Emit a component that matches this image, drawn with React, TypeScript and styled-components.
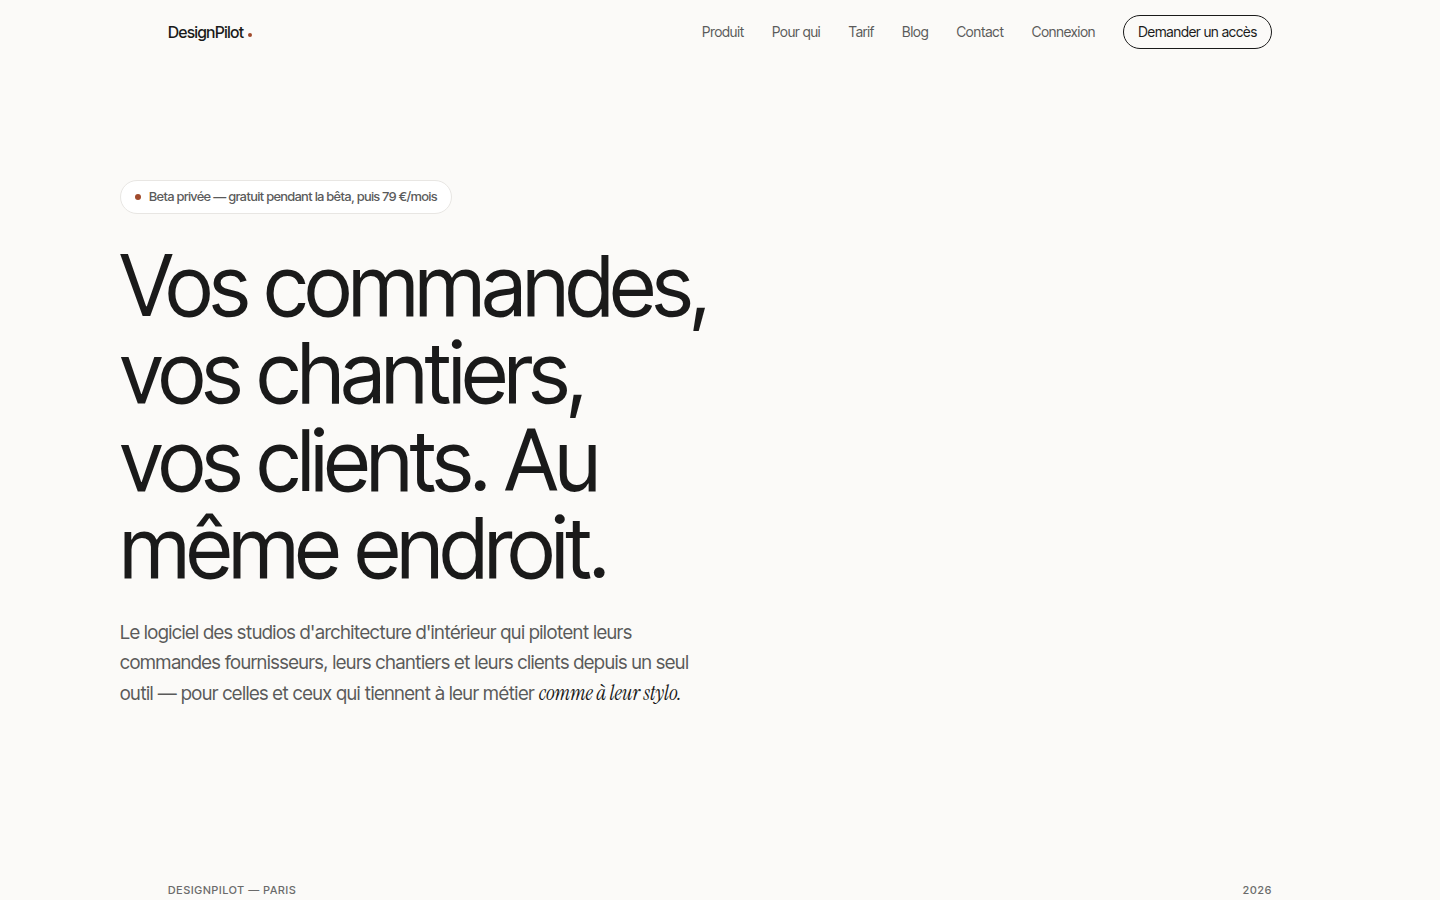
import React from "react";
import styled, { createGlobalStyle } from "styled-components";

const GlobalStyle = createGlobalStyle`
  *, *::before, *::after { box-sizing: border-box; }
  body {
    margin: 0;
    background: #fbfaf8;
    color: #1a1a1a;
    font-family: "Inter Tight", Inter, "Liberation Sans", sans-serif;
    -webkit-font-smoothing: antialiased;
  }
`;

const Page = styled.div`
  min-height: 100vh;
  display: flex;
  flex-direction: column;
`;

const Header = styled.header`
  width: 100%;
  max-width: 1200px;
  margin: 0 auto;
  height: 64px;
  padding: 0 48px;
  display: flex;
  align-items: center;
  justify-content: space-between;
`;

const Dot = styled.span<{ $size: number }>`
  width: ${(p) => p.$size}px;
  height: ${(p) => p.$size}px;
  border-radius: 50%;
  background: #a04a2c;
`;

const Brand = styled.a`
  display: inline-flex;
  align-items: center;
  gap: 4px;
  color: #1a1a1a;
  text-decoration: none;
  font-size: 16px;
  font-weight: 500;
  letter-spacing: -0.02em;

  ${Dot} {
    margin-top: 6px;
  }
`;

const Nav = styled.nav`
  display: flex;
  align-items: center;
  gap: 28px;
`;

const NavLink = styled.a`
  color: #5a5a5a;
  text-decoration: none;
  font-size: 14px;
  line-height: 32px;
  letter-spacing: -0.007em;
`;

const AccessLink = styled(NavLink)`
  color: #1a1a1a;
  border: 1px solid #1a1a1a;
  border-radius: 999px;
  padding: 0 14px;
`;

const Hero = styled.main`
  width: 100%;
  max-width: 1200px;
  margin: 0 auto;
  padding: 116px 0 168px;
  flex: 1;
`;

const Badge = styled.p`
  display: flex;
  width: fit-content;
  align-items: center;
  gap: 8px;
  margin: 0 0 28px;
  padding: 7px 14px 8px;
  border: 1px solid #e8e6e3;
  border-radius: 999px;
  background: #ffffff;
  color: #5a5a5a;
  font-size: 13px;
  line-height: 17px;
  font-weight: 500;
  letter-spacing: -0.02em;
`;

const Title = styled.h1`
  max-width: 600px;
  margin: 0 0 27px;
  font-size: 84px;
  line-height: 1.04;
  font-weight: 400;
  letter-spacing: -0.03em;
`;

const Lead = styled.p`
  max-width: 580px;
  margin: 0;
  color: #5a5a5a;
  font-size: 19px;
  line-height: 1.53;
  letter-spacing: -0.005em;
`;

const Accent = styled.em`
  color: #1a1a1a;
  font-family: "Instrument Serif", "Liberation Serif", serif;
  font-size: 21px;
`;

const Footer = styled.footer`
  width: 100%;
  max-width: 1200px;
  margin: 0 auto;
  padding: 0 48px;
  display: flex;
  justify-content: space-between;
  color: #6a6a6a;
  font-size: 11px;
  font-weight: 500;
  line-height: 20px;
  letter-spacing: 0.08em;
  text-transform: uppercase;
`;

const links = ["Produit", "Pour qui", "Tarif", "Blog", "Contact", "Connexion"];

export default function App() {
  return (
    <>
      <GlobalStyle />
      <Page>
        <Header>
          <Brand href="#">
            DesignPilot
            <Dot $size={4} />
          </Brand>
          <Nav aria-label="Navigation principale">
            {links.map((label) => (
              <NavLink key={label} href="#">{label}</NavLink>
            ))}
            <AccessLink href="#">Demander un accès</AccessLink>
          </Nav>
        </Header>
        <Hero>
          <Badge>
            <Dot $size={6} />
            Beta privée — gratuit pendant la bêta, puis 79 €/mois
          </Badge>
          <Title>Vos commandes, vos chantiers, vos clients. Au même endroit.</Title>
          <Lead>
            Le logiciel des studios d'architecture d'intérieur qui pilotent leurs
            commandes fournisseurs, leurs chantiers et leurs clients depuis un seul
            outil — pour celles et ceux qui tiennent à leur métier{" "}
            <Accent>comme à leur stylo.</Accent>
          </Lead>
        </Hero>
        <Footer>
          <span>DesignPilot — Paris</span>
          <span>2026</span>
        </Footer>
      </Page>
    </>
  );
}
